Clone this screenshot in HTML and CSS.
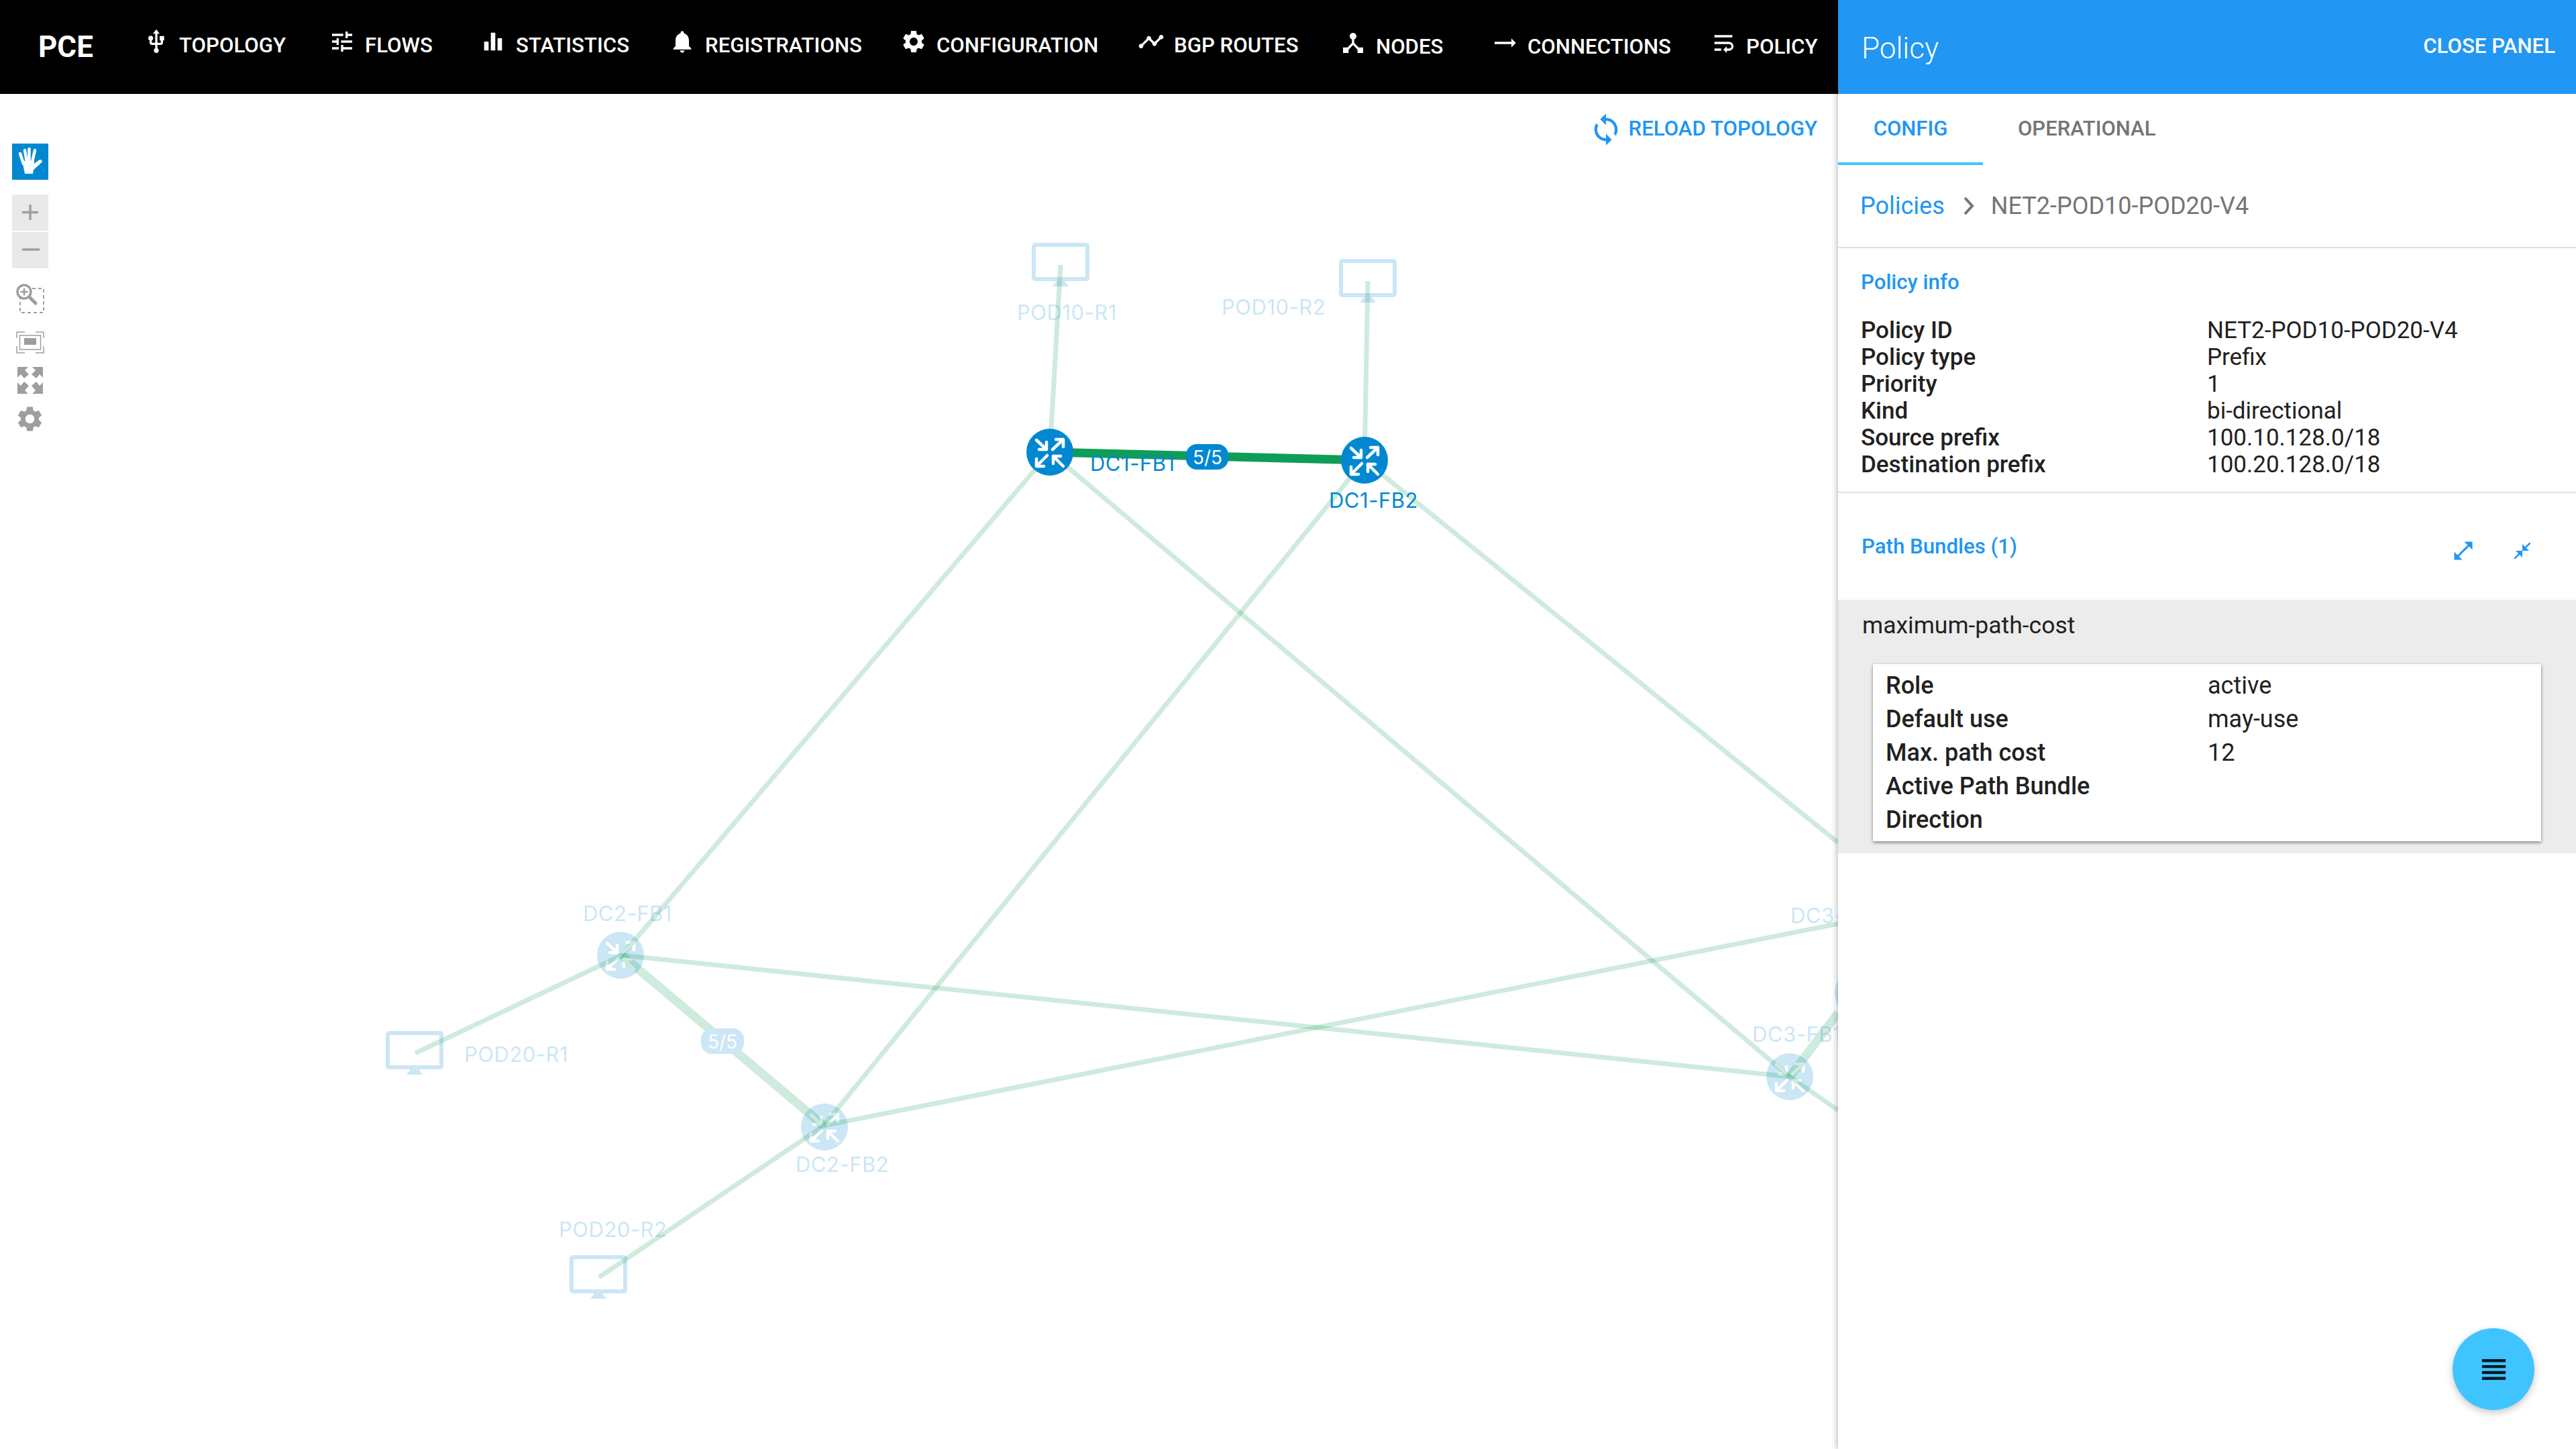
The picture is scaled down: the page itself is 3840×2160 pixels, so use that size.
FILE: index.html
```html
<!DOCTYPE html>
<html lang="en">
<head>
<meta charset="utf-8">
<title>PCE</title>
<link rel="stylesheet" href="styles.css">
</head>
<body>
<div class="app">
  <main class="workspace">
    <nav class="nav">
      <div class="brand">PCE</div>
      <a class="nav-item"><svg class="nav-icon" viewBox="0 0 24 24"><path d="M15 7v4h1v2h-3V5h2l-3-4-3 4h2v8H8v-2.07c.7-.37 1.2-1.08 1.2-1.93 0-1.21-.99-2.2-2.2-2.2-1.21 0-2.2.99-2.2 2.2 0 .85.5 1.56 1.2 1.93V13c0 1.11.89 2 2 2h3v3.05c-.71.37-1.2 1.1-1.2 1.95 0 1.22.99 2.2 2.2 2.2 1.21 0 2.2-.98 2.2-2.2 0-.85-.49-1.58-1.2-1.95V15h3c1.11 0 2-.89 2-2v-2h1V7h-4z"/></svg><span>TOPOLOGY</span></a>
      <a class="nav-item"><svg class="nav-icon" viewBox="0 0 24 24"><path d="M3 17v2h6v-2H3zM3 5v2h10V5H3zm10 16v-2h8v-2h-8v-2h-2v6h2zM7 9v2H3v2h4v2h2V9H7zm14 4v-2H11v2h10zm-6-4h2V7h4V5h-4V3h-2v6z"/></svg><span>FLOWS</span></a>
      <a class="nav-item"><svg class="nav-icon" viewBox="0 0 24 24"><path d="M10 20h4V4h-4v16zm-6 0h4v-8H4v8zM16 9v11h4V9h-4z"/></svg><span>STATISTICS</span></a>
      <a class="nav-item"><svg class="nav-icon" viewBox="0 0 24 24"><path d="M12 22c1.1 0 2-.9 2-2h-4c0 1.1.89 2 2 2zm6-6v-5c0-3.07-1.64-5.64-4.5-6.32V4c0-.83-.67-1.5-1.5-1.5s-1.5.67-1.5 1.5v.68C7.63 5.36 6 7.92 6 11v5l-2 2v1h16v-1l-2-2z"/></svg><span>REGISTRATIONS</span></a>
      <a class="nav-item"><svg class="nav-icon" viewBox="0 0 24 24"><path d="M19.14 12.94c.04-.3.06-.61.06-.94 0-.32-.02-.64-.07-.94l2.03-1.58c.18-.14.23-.41.12-.61l-1.92-3.32c-.12-.22-.37-.29-.59-.22l-2.39.96c-.5-.38-1.03-.7-1.62-.94l-.36-2.54c-.04-.24-.24-.41-.48-.41h-3.84c-.24 0-.43.17-.47.41l-.36 2.54c-.59.24-1.13.57-1.62.94l-2.39-.96c-.22-.08-.47 0-.59.22L2.74 8.87c-.12.21-.08.47.12.61l2.03 1.58c-.05.3-.09.63-.09.94s.02.64.07.94l-2.03 1.58c-.18.14-.23.41-.12.61l1.92 3.32c.12.22.37.29.59.22l2.39-.96c.5.38 1.03.7 1.62.94l.36 2.54c.05.24.24.41.48.41h3.84c.24 0 .44-.17.47-.41l.36-2.54c.59-.24 1.13-.56 1.62-.94l2.39.96c.22.08.47 0 .59-.22l1.92-3.32c.12-.22.07-.47-.12-.61l-2.01-1.58zM12 15.6c-1.98 0-3.6-1.62-3.6-3.6s1.62-3.6 3.6-3.6 3.6 1.62 3.6 3.6-1.62 3.6-3.6 3.6z"/></svg><span>CONFIGURATION</span></a>
      <a class="nav-item"><svg class="nav-icon" viewBox="0 0 24 24"><path d="M23 8c0 1.1-.9 2-2 2-.18 0-.35-.02-.51-.07l-3.56 3.55c.05.16.07.34.07.52 0 1.1-.9 2-2 2s-2-.9-2-2c0-.18.02-.36.07-.52l-2.55-2.55c-.16.05-.34.07-.52.07s-.36-.02-.52-.07l-4.55 4.56c.05.16.07.33.07.51 0 1.1-.9 2-2 2s-2-.9-2-2 .9-2 2-2c.18 0 .35.02.51.07l4.56-4.55C8.02 9.36 8 9.18 8 9c0-1.1.9-2 2-2s2 .9 2 2c0 .18-.02.36-.07.52l2.55 2.55c.16-.05.34-.07.52-.07s.36.02.52.07l3.55-3.56C19.02 8.35 19 8.18 19 8c0-1.1.9-2 2-2s2 .9 2 2z"/></svg><span>BGP ROUTES</span></a>
      <a class="nav-item nav-item-low"><svg class="nav-icon" viewBox="0 0 24 24"><path d="M17 16l-4-4V8.82C14.16 8.4 15 7.3 15 6c0-1.66-1.34-3-3-3S9 4.34 9 6c0 1.3.84 2.4 2 2.82V12l-4 4H3v5h5v-3.05l4-4.2 4 4.2V21h5v-5h-4z"/></svg><span>NODES</span></a>
      <a class="nav-item nav-item-low"><svg class="nav-icon" viewBox="0 0 24 24"><path d="M22 12l-4-4v3H3v2h15v3z"/></svg><span>CONNECTIONS</span></a>
      <a class="nav-item nav-item-low"><svg class="nav-icon" viewBox="0 0 24 24"><path d="M4 19h6v-2H4v2zM20 5H4v2h16V5zm-3 6H4v2h13.25c1.1 0 2 .9 2 2s-.9 2-2 2H15v-2l-3 3 3 3v-2h2c2.21 0 4-1.79 4-4s-1.79-4-4-4z"/></svg><span>POLICY</span></a>
    </nav>

    <section class="canvas">
      <svg class="topology" viewBox="0 140 2740 2020">
        <defs>
          <g id="router-arrows" class="router-arrows">
            <path d="M-20-18 -5-4M-5-15V-4H-16"/>
            <path d="M4-4 20-19M9-19H20V-8"/>
            <path d="M-4 5-20 21M-9 21H-20V10"/>
            <path d="M20 21 5 6M5 17V6H16"/>
          </g>
          <g id="monitor">
            <rect class="monitor-frame" x="3" y="3" width="80" height="51" rx="2"/>
            <path class="monitor-stand" d="M37 57H49L55 65H31Z"/>
          </g>
        </defs>

        <g class="faded-node">
          <circle cx="925" cy="1424" r="35"/><use href="#router-arrows" x="925" y="1424"/>
        </g>
        <g class="faded-node">
          <circle cx="1229" cy="1680" r="35"/><use href="#router-arrows" x="1229" y="1680"/>
        </g>
        <g class="faded-node">
          <circle cx="2668" cy="1605" r="35"/><use href="#router-arrows" x="2668" y="1605"/>
        </g>
        <g class="faded-node">
          <circle cx="2770" cy="1480" r="35"/>
        </g>

        <use class="faded-monitor" href="#monitor" x="1538" y="362"/>
        <use class="faded-monitor" href="#monitor" x="1996" y="386"/>
        <use class="faded-monitor" href="#monitor" x="575" y="1537"/>
        <use class="faded-monitor" href="#monitor" x="849" y="1871"/>

        <g class="link">
          <line x1="1581" y1="395" x2="1565" y2="674"/>
          <line x1="2039" y1="419" x2="2034" y2="686"/>
          <line x1="1565" y1="674" x2="927" y2="1424"/>
          <line x1="1565" y1="674" x2="2668" y2="1605"/>
          <line x1="2034" y1="686" x2="1228" y2="1678"/>
          <line x1="2034" y1="686" x2="2740" y2="1256"/>
          <line x1="927" y1="1424" x2="2668" y2="1605"/>
          <line x1="927" y1="1424" x2="619" y2="1570"/>
          <line x1="1228" y1="1678" x2="893" y2="1904"/>
          <line x1="1228" y1="1678" x2="2740" y2="1377"/>
          <line x1="2668" y1="1605" x2="2740" y2="1655"/>
        </g>
        <g class="link link-thick">
          <line x1="927" y1="1424" x2="1228" y2="1678"/>
          <line x1="2668" y1="1605" x2="2740" y2="1510"/>
        </g>

        <line class="link-active" x1="1565" y1="674" x2="2034" y2="686"/>

        <g class="faded-badge">
          <rect x="1045" y="1533" width="64" height="38" rx="16"/>
          <text x="1077" y="1563">5/5</text>
        </g>
        <g class="active-badge">
          <rect x="1768" y="662" width="63" height="38" rx="16"/>
          <text x="1800" y="692">5/5</text>
        </g>

        <g class="active-node">
          <circle cx="1565" cy="674" r="35"/><use href="#router-arrows" x="1565" y="674"/>
        </g>
        <g class="active-node">
          <circle cx="2034" cy="686" r="35"/><use href="#router-arrows" x="2034" y="686"/>
        </g>

        <text class="label label-active" x="1625" y="702">DC1-FB1</text>
        <text class="label label-active" x="1981" y="757">DC1-FB2</text>
        <text class="label label-faded" x="1516" y="477">POD10-R1</text>
        <text class="label label-faded" x="1821" y="469">POD10-R2</text>
        <text class="label label-faded" x="869" y="1373">DC2-FB1</text>
        <text class="label label-faded" x="692" y="1583">POD20-R1</text>
        <text class="label label-faded" x="1186" y="1747">DC2-FB2</text>
        <text class="label label-faded" x="833" y="1844">POD20-R2</text>
        <text class="label label-faded" x="2612" y="1553">DC3-FB1</text>
        <text class="label label-faded" x="2669" y="1376">DC3-FB2</text>
      </svg>

      <div class="toolbar">
        <button class="tool tool-active">
          <svg viewBox="0 0 54 54"><path class="hand-palm" d="M16 30 19 45H31L32 39 43 27 41 24 33 30 33 26H18Z"/><path class="hand-fingers" d="M12 15 17 30M19 10 22 28M25.500 8V27M34 10 30 28M42.500 26.500 32 36"/></svg>
        </button>
        <button class="tool tool-zoom-in">
          <svg viewBox="0 0 54 54"><path class="tool-line" d="M15 26.500H39M27 15V38"/></svg>
        </button>
        <button class="tool tool-zoom-out">
          <svg viewBox="0 0 54 54"><path class="tool-line" d="M15 26H41"/></svg>
        </button>
        <button class="tool tool-plain tool-select">
          <svg viewBox="0 0 54 54"><rect class="tool-dash" x="12" y="12" width="35" height="36"/><circle class="tool-lens" cx="18" cy="17" r="10"/><path class="tool-handle" d="M26 25 35 34"/><path class="tool-plus" d="M12.500 17H23.500M18 11.500V22.500"/></svg>
        </button>
        <button class="tool tool-plain tool-fit">
          <svg viewBox="0 0 54 54"><path class="tool-thin" d="M7 21V12H19M35 12H47V21M47 33V43H35M19 43H7V33"/><rect class="tool-thin" x="11.500" y="17" width="31" height="21"/><rect class="tool-fill" x="18" y="21" width="18" height="10"/></svg>
        </button>
        <button class="tool tool-plain tool-full">
          <svg viewBox="0 0 54 54"><g class="tool-fill"><path d="M8 7H24L19 12 25 18 18 24 13 18 8 23Z"/><path d="M46 7H30L35 12 29 18 36 24 41 18 46 23Z"/><path d="M8 47H24L19 42 25 35 18 29 13 35 8 30Z"/><path d="M46 47H30L35 42 29 35 36 29 41 35 46 30Z"/></g></svg>
        </button>
        <button class="tool tool-plain tool-gear">
          <svg viewBox="0 0 24 24"><path class="tool-fill" d="M19.14 12.94c.04-.3.06-.61.06-.94 0-.32-.02-.64-.07-.94l2.03-1.58c.18-.14.23-.41.12-.61l-1.92-3.32c-.12-.22-.37-.29-.59-.22l-2.39.96c-.5-.38-1.03-.7-1.62-.94l-.36-2.54c-.04-.24-.24-.41-.48-.41h-3.84c-.24 0-.43.17-.47.41l-.36 2.54c-.59.24-1.13.57-1.62.94l-2.39-.96c-.22-.08-.47 0-.59.22L2.74 8.87c-.12.21-.08.47.12.61l2.03 1.58c-.05.3-.09.63-.09.94s.02.64.07.94l-2.03 1.58c-.18.14-.23.41-.12.61l1.92 3.32c.12.22.37.29.59.22l2.39-.96c.5.38 1.03.7 1.62.94l.36 2.54c.05.24.24.41.48.41h3.84c.24 0 .44-.17.47-.41l.36-2.54c.59-.24 1.13-.56 1.62-.94l2.39.96c.22.08.47 0 .59-.22l1.92-3.32c.12-.22.07-.47-.12-.61l-2.01-1.58zM12 15.6c-1.98 0-3.6-1.62-3.6-3.6s1.62-3.6 3.6-3.6 3.6 1.62 3.6 3.6-1.62 3.6-3.6 3.6z"/></svg>
        </button>
      </div>

      <button class="reload">
        <svg viewBox="0 0 24 24"><path d="M12 4V1L8 5l4 4V6c3.31 0 6 2.69 6 6 0 1.01-.25 1.97-.7 2.8l1.46 1.46C19.54 15.03 20 13.57 20 12c0-4.42-3.58-8-8-8zm0 14c-3.31 0-6-2.69-6-6 0-1.01.25-1.97.7-2.8L5.24 7.74C4.46 8.97 4 10.43 4 12c0 4.42 3.58 8 8 8v3l4-4-4-4v3z"/></svg>
        <span>RELOAD TOPOLOGY</span>
      </button>
    </section>
  </main>

  <aside class="panel">
    <header class="panel-header">
      <h1 class="panel-title">Policy</h1>
      <button class="panel-close">CLOSE PANEL</button>
    </header>
    <div class="tabs">
      <div class="tab tab-active">CONFIG</div>
      <div class="tab tab-second">OPERATIONAL</div>
    </div>
    <div class="breadcrumb">
      <a class="crumb-link">Policies</a>
      <svg class="crumb-sep" viewBox="0 0 18 26"><path d="M3 1 14 13 3 25"/></svg>
      <span class="crumb-current">NET2-POD10-POD20-V4</span>
    </div>
    <section class="info">
      <h2 class="section-title">Policy info</h2>
      <dl class="info-grid">
        <dt>Policy ID</dt><dd>NET2-POD10-POD20-V4</dd>
        <dt>Policy type</dt><dd>Prefix</dd>
        <dt>Priority</dt><dd>1</dd>
        <dt>Kind</dt><dd>bi-directional</dd>
        <dt>Source prefix</dt><dd>100.10.128.0/18</dd>
        <dt>Destination prefix</dt><dd>100.20.128.0/18</dd>
      </dl>
    </section>
    <div class="bundles-head">
      <h2 class="section-title">Path Bundles (1)</h2>
      <div class="bundle-actions">
        <svg class="action-expand" viewBox="0 0 24 24"><path d="M21 11V3h-8l3.290 3.290-10 10L3 13v8h8l-3.290-3.290 10-10z"/></svg>
        <svg class="action-collapse" viewBox="0 0 24 24"><path d="M22 3.410l-5.290 5.290L20 12h-8V4l3.290 3.290L20.590 2 22 3.410zM3.410 22l5.290-5.290L12 20v-8H4l3.290 3.290L2 20.590 3.410 22z"/></svg>
      </div>
    </div>
    <section class="bundle">
      <div class="bundle-name">maximum-path-cost</div>
      <dl class="bundle-card">
        <dt>Role</dt><dd>active</dd>
        <dt>Default use</dt><dd>may-use</dd>
        <dt>Max. path cost</dt><dd>12</dd>
        <dt>Active Path Bundle</dt><dd></dd>
        <dt>Direction</dt><dd></dd>
      </dl>
    </section>
    <button class="fab">
      <svg viewBox="0 0 24 24"><path d="M4 15h16v-2H4v2zm0 4h16v-2H4v2zm0-8h16V9H4v2zm0-6v2h16V5H4z"/></svg>
    </button>
  </aside>
</div>
</body>
</html>
```

FILE: styles.css
```css
* { box-sizing: border-box; }
html, body { margin: 0; padding: 0; }
body {
  width: 3840px;
  height: 2160px;
  overflow: hidden;
  background: #fff;
  font-family: Roboto, "Liberation Sans", sans-serif;
  color: #212121;
}
button { border: 0; background: none; padding: 0; margin: 0; font: inherit; color: inherit; }
h1, h2, dl, dd, dt { margin: 0; padding: 0; }

.app { display: grid; grid-template-columns: 2740px 1100px; height: 2160px; }
.workspace { display: flex; flex-direction: column; min-width: 0; }

/* Top navigation */
.nav {
  flex: 0 0 140px;
  display: grid;
  grid-template-columns: 213px 277px 225px 282px 345px 354px 301px 226px 326px 191px;
  align-items: center;
  background: #000;
  color: #fff;
  padding-bottom: 6px;
}
.brand { padding-left: 57px; font-size: 44px; font-weight: 700; padding-top: 6px; }
.nav-item { display: flex; align-items: center; gap: 14px; font-size: 31.2px; font-weight: 500; white-space: nowrap; }
.nav-item-low { padding-top: 4px; }
.nav-icon { width: 40px; height: 40px; fill: #fff; margin-top: -10px; flex: none; }

/* Canvas */
.canvas { position: relative; flex: 1; overflow: hidden; }
.topology { position: absolute; left: 0; top: 0; width: 2740px; height: 2020px; }

.link line { stroke: #0f9d58; stroke-width: 7; opacity: .2; }
.link-thick line { stroke-width: 13; }
.link-active { stroke: #0f9d58; stroke-width: 13; }
.router-arrows path { fill: none; stroke: #fff; stroke-width: 4.5; stroke-linecap: round; stroke-linejoin: round; }
.faded-node { opacity: .2; }
.faded-node circle, .active-node circle { fill: #0288d1; }
.faded-monitor { opacity: .2; }
.monitor-frame { fill: none; stroke: #0288d1; stroke-width: 6; }
.monitor-stand { fill: #0288d1; }
.faded-badge rect { fill: #cce7f6; }
.active-badge rect { fill: #0288d1; }
.faded-badge text, .active-badge text {
  fill: #fff; font-family: Inter, Roboto, sans-serif; font-size: 28px; text-anchor: middle;
}
.label { font-family: Inter, Roboto, sans-serif; font-size: 31px; letter-spacing: .5px; fill: #0288d1; }
.label-faded { opacity: .2; }

/* Left tools */
.toolbar { position: absolute; left: 18px; top: 74px; display: flex; flex-direction: column; width: 54px; }
.tool { display: block; width: 54px; height: 54px; }
.tool svg { display: block; width: 54px; height: 54px; }
.tool-active { background: #0288d1; margin-bottom: 22px; }
.tool-zoom-in { background: #e9e9e9; margin-bottom: 2px; }
.tool-zoom-out { background: #e9e9e9; margin-bottom: 18px; }
.tool-select { margin-bottom: 11px; }
.tool-fit { margin-bottom: 3px; }
.tool-full { margin-bottom: 3px; }
.tool-gear svg { width: 45px; height: 45px; margin: 4px; }
.tool-line { fill: none; stroke: #9e9e9e; stroke-width: 3.5; }
.hand-palm { fill: #fff; }
.hand-fingers { fill: none; stroke: #fff; stroke-width: 4.5; stroke-linecap: round; }
.tool-dash { fill: none; stroke: #9e9e9e; stroke-width: 2; stroke-dasharray: 5 4; }
.tool-lens { fill: #fff; stroke: #9e9e9e; stroke-width: 3.5; }
.tool-handle { fill: none; stroke: #9e9e9e; stroke-width: 5; stroke-linecap: round; }
.tool-plus { fill: none; stroke: #9e9e9e; stroke-width: 2.5; }
.tool-thin { fill: none; stroke: #9e9e9e; stroke-width: 1.5; }
.tool-fill { fill: #9e9e9e; }

.reload {
  position: absolute; right: 31px; top: 24px;
  display: flex; align-items: center; gap: 8px;
  color: #2196f3; font-size: 31.2px; font-weight: 500; white-space: nowrap;
}
.reload svg { width: 52px; height: 52px; fill: #2196f3; margin-top: 3px; }

/* Panel */
.panel { position: relative; display: flex; flex-direction: column; background: #fff; box-shadow: -2px 0 8px rgba(0, 0, 0, .25); z-index: 2; }
.panel-header {
  flex: 0 0 140px; background: #2196f3; color: #fff;
  display: flex; align-items: center; justify-content: space-between;
  padding: 0 31px 0 35px;
}
.panel-title { font-size: 44px; font-weight: 300; padding-top: 3px; }
.panel-close { font-size: 31.2px; font-weight: 500; color: #fff; padding-bottom: 3px; }
.tabs { flex: 0 0 106px; display: flex; }
.tab {
  display: flex; align-items: center; height: 106px; padding: 0 54px 4px 52px;
  font-size: 31px; font-weight: 500; color: #757575;
}
.tab-active { color: #2196f3; width: 216px; justify-content: center; padding: 0; border-bottom: 4px solid #40c4ff; }
.breadcrumb {
  flex: 0 0 124px; display: flex; align-items: center;
  border-bottom: 2px solid #e0e0e0; padding-left: 33px; font-size: 36px;
}
.crumb-link { color: #2196f3; }
.crumb-sep { width: 18px; height: 26px; margin: 0 24px 0 27px; fill: none; stroke: #757575; stroke-width: 4; flex: none; }
.crumb-current { color: #757575; }
.info { flex: 0 0 365px; padding: 32px 34px 0; border-bottom: 2px solid #e0e0e0; }
.section-title { font-size: 31.2px; font-weight: 500; color: #2196f3; }
.info-grid { display: grid; grid-template-columns: 516px 1fr; margin-top: 34px; font-size: 35px; line-height: 40px; }
.info-grid dt, .bundle-card dt { font-weight: 500; }
.info-grid dd, .bundle-card dd { font-weight: 400; }
.bundles-head { flex: 0 0 159px; display: flex; align-items: center; justify-content: space-between; padding: 0 65px 0 35px; }
.bundle-actions { display: flex; align-items: center; gap: 55px; margin-top: 12px; }
.action-expand { width: 36px; height: 36px; fill: #2196f3; }
.action-collapse { width: 30px; height: 30px; fill: #2196f3; }
.bundle { background: #ececec; padding: 18px 52px 18px 36px; }
.bundle-name { font-size: 35.5px; line-height: 40px; margin-bottom: 38px; }
.bundle-card {
  display: grid; grid-template-columns: 480px 1fr; grid-auto-rows: 50px; align-items: center;
  margin-left: 16px; padding: 7px 19px; background: #fff; font-size: 36px;
  box-shadow: 0 2px 5px rgba(0, 0, 0, .45);
}
.fab {
  position: absolute; left: 916px; top: 1980px; width: 122px; height: 122px; border-radius: 50%;
  background: #40c4ff; display: flex; align-items: center; justify-content: center;
  box-shadow: 0 4px 12px rgba(0, 0, 0, .22);
}
.fab svg { width: 53px; height: 53px; fill: rgba(0, 0, 0, .87); }
```
